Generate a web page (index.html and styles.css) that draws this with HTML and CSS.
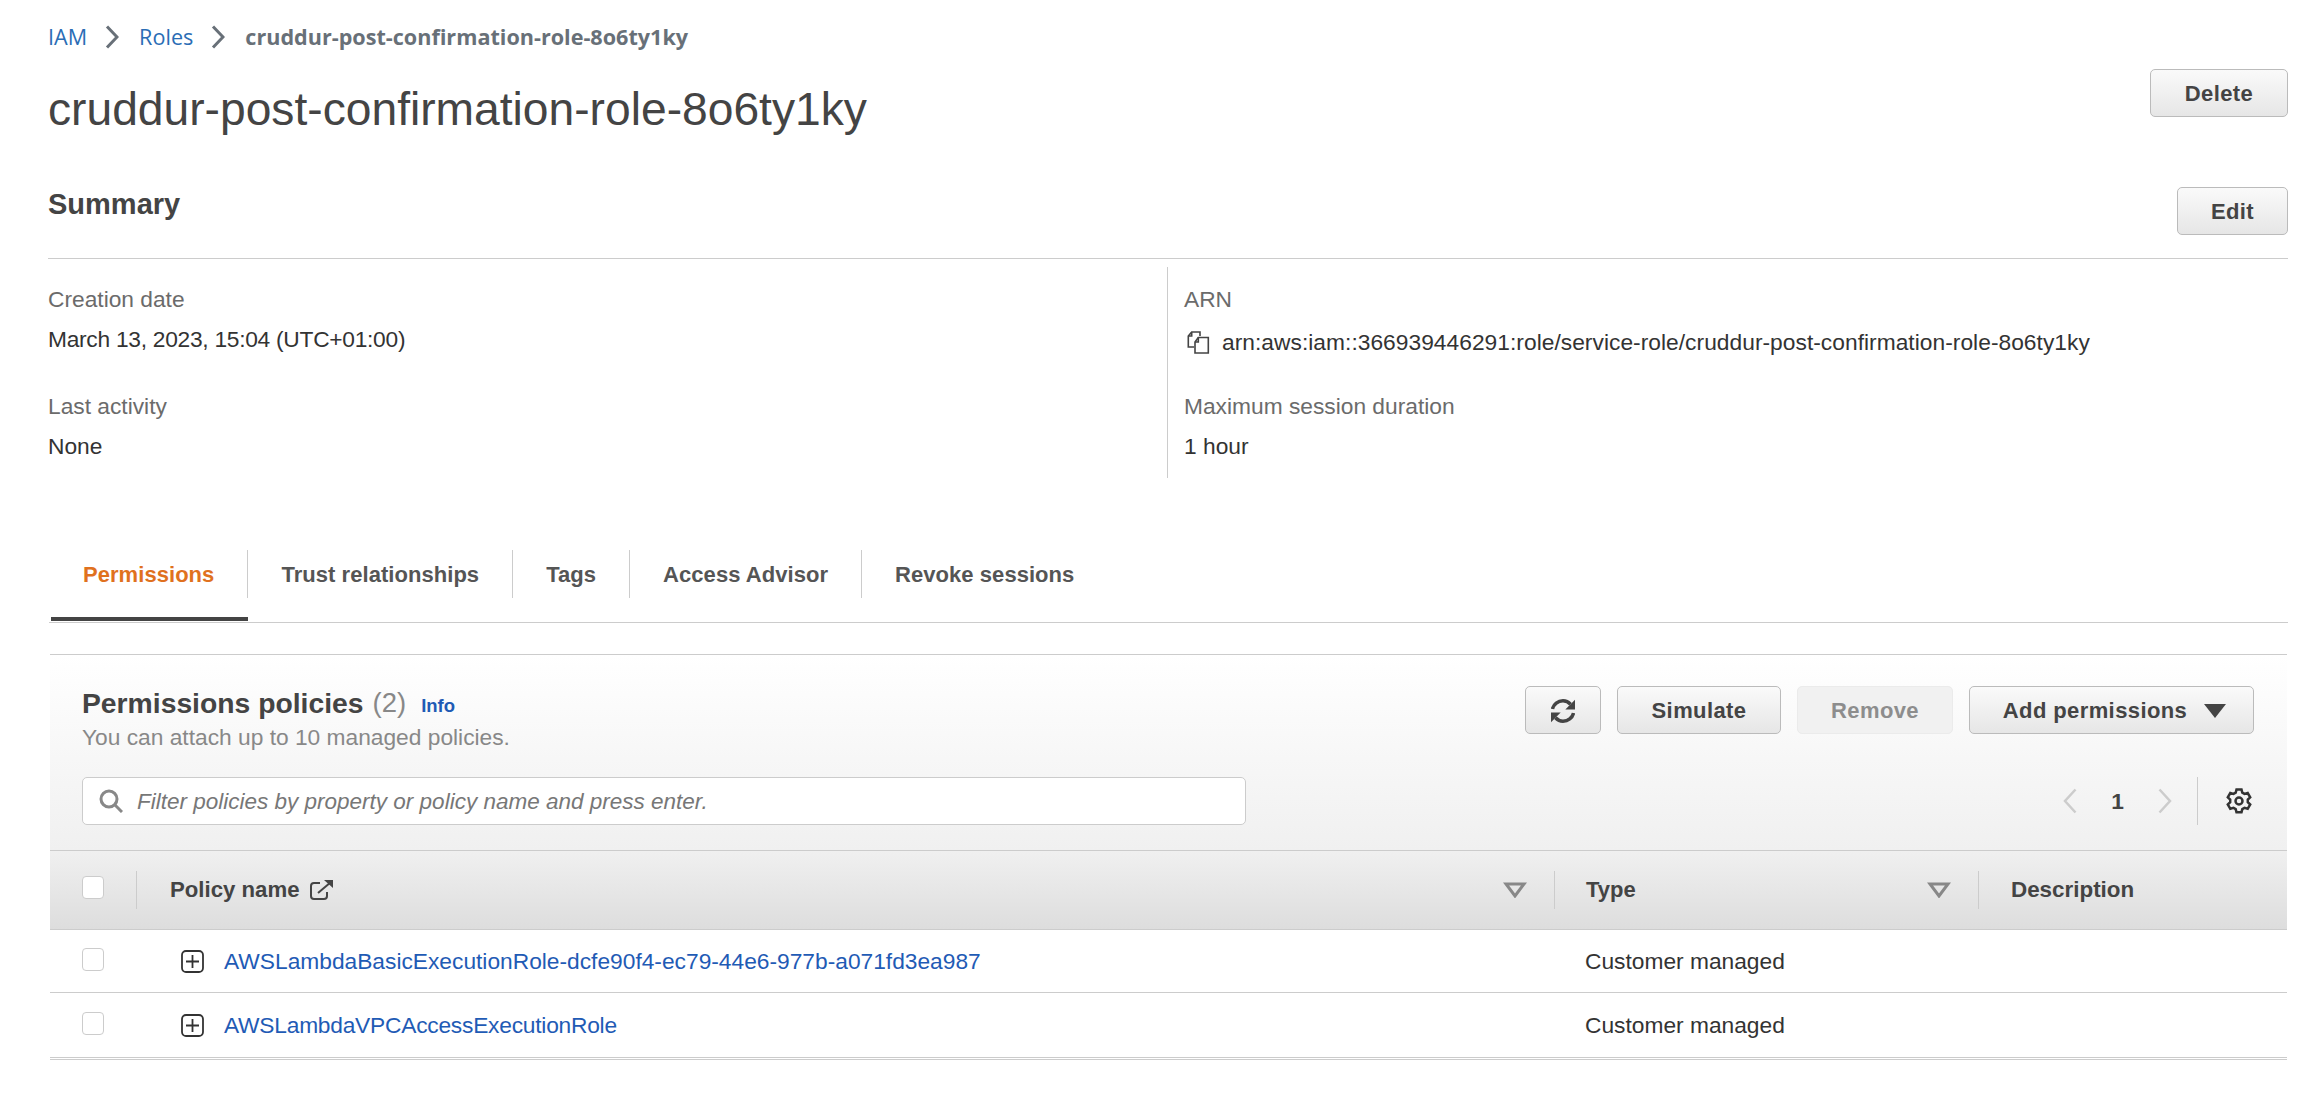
FILE: index.html
```html
<!DOCTYPE html>
<html lang="en">
<head>
<meta charset="utf-8">
<title>cruddur-post-confirmation-role-8o6ty1ky</title>
<link rel="stylesheet" href="styles.css">
</head>
<body>
<div class="page">
  <nav class="crumbs">
    <a class="crumb-link">IAM</a>
    <svg class="crumb-sep" viewBox="0 0 14 24"><path d="M2 1.500l10 10.500L2 22.500"/></svg>
    <a class="crumb-link">Roles</a>
    <svg class="crumb-sep" viewBox="0 0 14 24"><path d="M2 1.500l10 10.500L2 22.500"/></svg>
    <span class="crumb-current">cruddur-post-confirmation-role-8o6ty1ky</span>
  </nav>
  <header class="title-row">
    <h1 class="title">cruddur-post-confirmation-role-8o6ty1ky</h1>
    <button class="btn btn-delete">Delete</button>
  </header>
  <section class="summary-head">
    <h2 class="summary-title">Summary</h2>
    <button class="btn btn-edit">Edit</button>
  </section>
  <section class="summary">
    <div class="summary-col">
      <div class="label">Creation date</div>
      <div class="value value-date">March 13, 2023, 15:04 (UTC+01:00)</div>
      <div class="label label-next">Last activity</div>
      <div class="value">None</div>
    </div>
    <div class="summary-col summary-col-right">
      <div class="label">ARN</div>
      <div class="value value-arn">
        <svg class="copy-icon" viewBox="0 0 23 23"><path d="M7 16H1.300V5L4.700 1H13v4"/><path d="M4.700 1v4H1.300"/><path d="M11.300 6.500L8 11v11h13.300V6.500z"/><path d="M11.300 6.500V11H8"/></svg>
        <span>arn:aws:iam::366939446291:role/service-role/cruddur-post-confirmation-role-8o6ty1ky</span>
      </div>
      <div class="label label-next">Maximum session duration</div>
      <div class="value">1 hour</div>
    </div>
  </section>
  <nav class="tabs">
    <a class="tab tab-active">Permissions</a>
    <a class="tab">Trust relationships</a>
    <a class="tab">Tags</a>
    <a class="tab">Access Advisor</a>
    <a class="tab tab-last">Revoke sessions</a>
  </nav>
  <section class="panel">
    <div class="panel-top">
      <div class="panel-head">
        <div class="panel-heading">
          <div class="panel-title-line">
            <h2 class="panel-title">Permissions policies</h2>
            <span class="panel-count">(2)</span>
            <a class="info">Info</a>
          </div>
          <div class="panel-sub">You can attach up to 10 managed policies.</div>
        </div>
        <div class="actions">
          <button class="btn btn-icon"><svg class="refresh" viewBox="0 0 24 24"><path d="M1.500 10C2.500 5 7 1.800 12 1.800c3 0 5.500 1.200 7.500 3.400"/><path d="M22.500 14C21.500 19 17 22.200 12 22.200c-3 0-5.500-1.200-7.500-3.400"/><path class="fill" d="M24 .8v9.700h-9.700z"/><path class="fill" d="M0 23.200v-9.700h9.700z"/></svg></button>
          <button class="btn btn-simulate">Simulate</button>
          <button class="btn btn-remove" disabled>Remove</button>
          <button class="btn btn-add">Add permissions<svg class="caret" viewBox="0 0 24 16"><path d="M1 1h22L12 15z"/></svg></button>
        </div>
      </div>
      <div class="filter-row">
        <div class="search">
          <svg class="search-icon" viewBox="0 0 24 24"><circle cx="10" cy="10" r="8"/><path d="M15.800 15.800L23 23"/></svg>
          <span class="search-text">Filter policies by property or policy name and press enter.</span>
        </div>
        <div class="pager">
          <svg class="pager-arrow" viewBox="0 0 14 26"><path d="M12.500 1.500L2 13l10.500 11.500"/></svg>
          <span class="pager-num">1</span>
          <svg class="pager-arrow" viewBox="0 0 14 26"><path d="M1.500 1.500L12 13 1.500 24.500"/></svg>
          <span class="pager-sep"></span>
          <svg class="gear" viewBox="0 0 26 26"><path d="M10.500 1.500h5l.8 3.200 2.200 1.200 3.200-.9 2.500 4.300-2.400 2.300v2.600l2.400 2.300-2.500 4.300-3.200-.9-2.200 1.200-.8 3.200h-5l-.8-3.200-2.200-1.200-3.200.9-2.500-4.300 2.400-2.300v-2.600L1.800 9.300l2.500-4.300 3.200.9 2.200-1.200z"/><circle cx="13" cy="13" r="3.500"/></svg>
        </div>
      </div>
    </div>
    <div class="row row-head">
      <div class="cell cell-check cell-div"><span class="checkbox"></span></div>
      <div class="cell cell-name cell-div">
        <span class="th th-name">Policy name</span>
        <svg class="ext" viewBox="0 0 23 20"><path d="M10 3H4a3 3 0 0 0-3 3v10a3 3 0 0 0 3 3h10a3 3 0 0 0 3-3v-4"/><path d="M8 13L21 2"/><path class="fill" d="M14 0h9v8z"/></svg>
        <svg class="sort" viewBox="0 0 24 16"><path d="M3 2h18l-9 12z"/></svg>
      </div>
      <div class="cell cell-type cell-div">
        <span class="th">Type</span>
        <svg class="sort" viewBox="0 0 24 16"><path d="M3 2h18l-9 12z"/></svg>
      </div>
      <div class="cell cell-desc"><span class="th th-desc">Description</span></div>
    </div>
    <div class="row row-body">
      <div class="cell cell-check"><span class="checkbox"></span></div>
      <div class="cell cell-name cell-name-body">
        <svg class="expand" viewBox="0 0 23 23"><rect x="1" y="1" width="21" height="21" rx="4"/><path d="M11.500 5v13M5 11.500h13"/></svg>
        <a class="link">AWSLambdaBasicExecutionRole-dcfe90f4-ec79-44e6-977b-a071fd3ea987</a>
      </div>
      <div class="cell cell-type">Customer managed</div>
      <div class="cell cell-desc"></div>
    </div>
    <div class="row row-body row-end">
      <div class="cell cell-check"><span class="checkbox"></span></div>
      <div class="cell cell-name cell-name-body">
        <svg class="expand" viewBox="0 0 23 23"><rect x="1" y="1" width="21" height="21" rx="4"/><path d="M11.500 5v13M5 11.500h13"/></svg>
        <a class="link link-tight">AWSLambdaVPCAccessExecutionRole</a>
      </div>
      <div class="cell cell-type">Customer managed</div>
      <div class="cell cell-desc"></div>
    </div>
  </section>
</div>
</body>
</html>
```
FILE: styles.css
```css
* { box-sizing: border-box; }
html, body { margin: 0; background: #fff; }
body { font-family: "Liberation Sans", Arial, sans-serif; font-size: 22.75px; line-height: 30px; color: #444; }
.page { padding: 22px 30px 0 48px; height: 1094px; overflow: hidden; }
.link { color: #1f5bb5; text-decoration: none; }
.link-tight { letter-spacing: -.23px; }
h1, h2 { margin: 0; }

.crumbs { display: flex; align-items: center; height: 30px; }
.crumb-link { font-family: "Open Sans", "Liberation Sans", sans-serif; font-size: 21.600px; color: #2a6db5; }
.crumb-sep { width: 14px; height: 24px; margin: 0 20px 0 18px; fill: none; stroke: #687078; stroke-width: 3; }
.crumb-current { font-family: "Open Sans", "Liberation Sans", sans-serif; font-size: 21.600px; font-weight: 700; color: #687078; }

.title-row { display: flex; justify-content: space-between; align-items: flex-start; margin-top: 17px; height: 69px; }
.title { font-size: 46.200px; font-weight: 400; line-height: 56px; padding-top: 12px; height: 69px; color: #444; }

.btn { display: inline-flex; align-items: center; justify-content: center; height: 48px; padding: 1px 0 0; font: 700 22px/30px "Liberation Sans", Arial, sans-serif; color: #444; letter-spacing: .4px; border: 1px solid #bbb; border-radius: 5px; background: linear-gradient(#fafafa, #e6e6e6); }
.btn-delete { width: 138px; }
.btn-edit { width: 111px; }
.btn-icon { width: 76px; }
.btn-simulate { width: 164px; }
.btn-remove { width: 156px; color: #8d8d8d; background: #f1f1f1; border-color: #ebebeb; }
.btn-add { width: 285px; padding-left: 7px; }

.summary-head { display: flex; justify-content: space-between; align-items: flex-start; margin-top: 49px; height: 72px; border-bottom: 1px solid #ccc; }
.summary-title { font-size: 29px; font-weight: 700; line-height: 34px; }

.summary { display: grid; grid-template-columns: 1119px 1fr; margin-top: 8px; height: 211px; }
.summary-col { padding-top: 17px; }
.summary-col-right { border-left: 1px solid #ccc; padding-left: 16px; }
.label { color: #6b6b6b; }
.label-next { margin-top: 37px; }
.value { margin-top: 10px; color: #333; }
.value-date { letter-spacing: -.27px; }
.value-arn { display: flex; align-items: center; margin-top: 13px; margin-bottom: -3px; letter-spacing: .035px; }
.copy-icon { width: 23px; height: 23px; margin: 0 12px 0 3px; fill: none; stroke: #444; stroke-width: 1.600; }

.tabs { display: flex; margin: 72px 0 0 1px; height: 73px; border-bottom: 1px solid #ccc; padding-left: 2px; }
.tab { position: relative; height: 48px; padding: 10px 33px 0; font-weight: 700; font-size: 22px; letter-spacing: .05px; color: #555; border-right: 1px solid #ccc; }
.tab-active { padding-left: 32px; color: #e0711e; }
.tab-last { border-right: 0; }
.tab-active::after { content: ""; position: absolute; left: 0; right: -1px; bottom: -23px; height: 4px; background: #444; }

.panel { margin: 31px 1px 0 2px; border-top: 1px solid #ccc; }
.panel-top { padding: 31px 33px 25px 32px; height: 196px; background: linear-gradient(#fff, #f0f0f0); border-bottom: 1px solid #ccc; }
.panel-head { display: flex; justify-content: space-between; align-items: flex-start; height: 91px; }
.panel-title-line { display: flex; align-items: center; height: 34px; }
.panel-title { font-size: 28.300px; font-weight: 700; line-height: 34px; color: #444; }
.panel-count { font-size: 27.500px; margin-left: 9px; color: #888; }
.info { margin-left: 15px; font-size: 18.500px; font-weight: 700; color: #1f5bb5; padding-top: 6px; }
.panel-sub { margin-top: 2px; color: #888; }
.actions { display: flex; gap: 16px; }
.refresh { width: 24px; height: 24px; fill: none; stroke: #444; stroke-width: 3.500; }
.refresh .fill { fill: #444; stroke: none; }
.caret { width: 24px; height: 16px; margin-left: 16px; fill: #444; }

.filter-row { display: flex; justify-content: space-between; align-items: center; height: 48px; }
.search { display: flex; align-items: center; width: 1164px; height: 48px; background: #fff; border: 1px solid #ccc; border-radius: 5px; padding-left: 16px; }
.search-icon { width: 24px; height: 24px; fill: none; stroke: #888; stroke-width: 3; }
.search-text { margin-left: 14px; padding-top: 1px; font-style: italic; font-size: 22.500px; color: #777; }
.pager { display: flex; align-items: center; margin-right: 2px; }
.pager-arrow { width: 14px; height: 26px; fill: none; stroke: #ccc; stroke-width: 2.500; }
.pager-num { width: 81px; text-align: center; font-weight: 700; }
.pager-sep { width: 1px; height: 48px; background: #ccc; margin: 0 28px 0 25px; }
.gear { width: 26px; height: 26px; fill: none; stroke: #333; stroke-width: 2.500; }

.row { display: grid; grid-template-columns: 87px 1418px 424px 1fr; }
.row-head { height: 79px; align-items: center; background: linear-gradient(#f0f0f0, #ddd); border-bottom: 1px solid #ccc; }
.row-body { height: 63px; align-items: center; border-bottom: 1px solid #ccc; }
.row-end { border-bottom: 3px double #ccc; height: 67px; }
.cell { display: flex; align-items: center; }
.cell-div { height: 38px; border-right: 1px solid #ccc; }
.cell-check { padding-left: 32px; }
.cell-name { padding: 0 27px 0 33px; }
.cell-name-body { padding-left: 44px; }
.cell-type { padding: 0 27px 0 31px; color: #333; }
.row-body .cell-type { padding-left: 30px; }
.cell-desc { padding-left: 32px; }
.checkbox { display: block; width: 22px; height: 23px; margin-bottom: 5px; background: #fff; border: 1.500px solid #ccc; border-radius: 4px; }
.row-body .checkbox { margin-bottom: 3px; }
.th { font-size: 22px; font-weight: 700; color: #444; }
.th-name { font-size: 22.200px; }
.th-desc { font-size: 22.400px; }
.ext { width: 23px; height: 20px; margin-left: 10px; fill: none; stroke: #444; stroke-width: 2; }
.ext .fill { fill: #444; stroke: none; }
.sort { width: 24px; height: 16px; margin-left: auto; fill: none; stroke: #888; stroke-width: 3; }
.expand { width: 23px; height: 23px; flex: none; fill: none; stroke: #333; stroke-width: 1.800; }
.cell-name-body .link { margin-left: 20px; }
```
